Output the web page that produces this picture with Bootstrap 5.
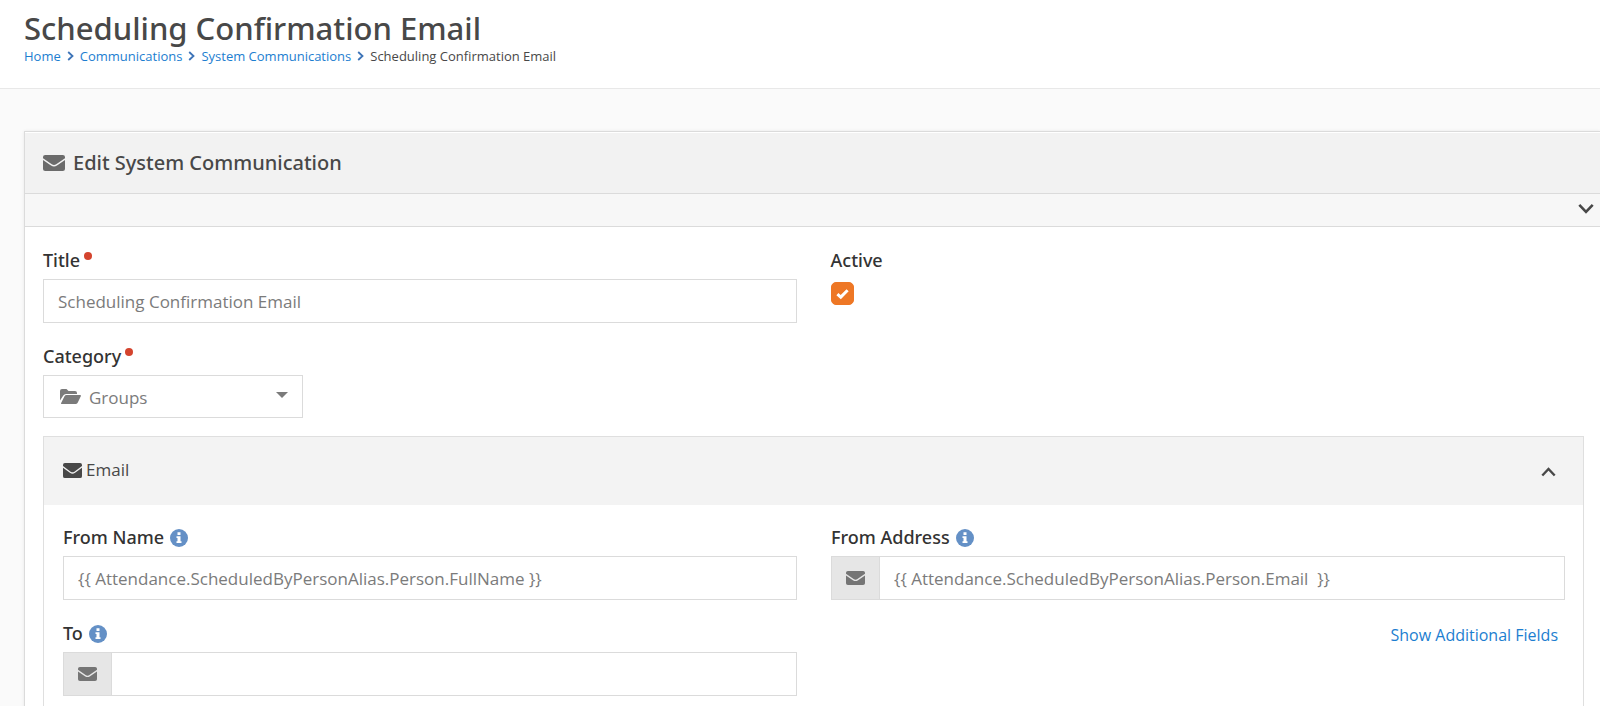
<!DOCTYPE html>
<html lang="en">
<head>
<meta charset="utf-8">
<meta name="viewport" content="width=device-width, initial-scale=1">
<title>Scheduling Confirmation Email</title>
<link href="https://cdn.jsdelivr.net/npm/bootstrap@5.3.0/dist/css/bootstrap.min.css" rel="stylesheet">
<style>
  body { font-family: "Open Sans", "Noto Sans", sans-serif; font-size: 17px; line-height: 24px; color: #484848; background: #fafafa; overflow-x: hidden; }
  a { color: #1c7ed0; text-decoration: none; }
  svg { fill: currentColor; flex: none; }
  .page-head { background: #fff; border-bottom: 1px solid #e8e8e8; padding: 10px 24px 22px; }
  .page-head h1, .edit-head h2, .field-label { font-family: "Noto Sans", sans-serif; font-weight: 500; }
  .page-head h1 { font-size: 31px; line-height: 36px; margin: 0; color: #484848; }
  .breadcrumb { font-size: 13px; line-height: 20px; margin: 0; }
  .breadcrumb svg { color: #3d74b8; margin: 0 6px; }
  .edit-panel { margin: 42px 0 0 24px; background: #fff; border: 1px solid #dbdbdb; border-right: 0; box-shadow: 0 0 3px rgba(0,0,0,.08); }
  .edit-head { background: #f2f2f2; height: 62px; padding: 0 18px; border-bottom: 1px solid #dbdbdb; box-shadow: inset 0 1px #fff; }
  .edit-head h2 { font-size: 20px; line-height: 28px; margin: 0; }
  .edit-head svg { color: #6b6b6b; }
  .drawer-bar { background: #f7f7f7; height: 33px; padding: 0 6px 4px; border-bottom: 1px solid #dbdbdb; }
  .plain-btn { border: 0; background: none; padding: 0; color: #484848; display: flex; }
  .edit-body { padding: 21px 16px 0 18px; }
  .row { --bs-gutter-x: 34px; }
  .next-field { margin-top: 21px; }
  .field-label { display: flex; align-items: center; height: 24px; margin-bottom: 7px; font-size: 18px; color: #333; }
  .req::after { content: ""; width: 8px; height: 8px; border-radius: 50%; background: #d4442e; margin: 0 0 8px 4px; }
  .help-btn { color: #6490c6; margin-left: 6px; }
  .form-control, .form-select { font-size: 17px; line-height: 24px; height: 44px; border: 1px solid #dbdbdb; border-radius: 0; color: #7b7b7b; background-color: #fff; }
  .form-control { padding: 8px 14px; }
  .pick { width: 260px; height: 43px; padding: 0 14px 0 16px; border: 1px solid #dbdbdb; color: #7b7b7b; }
  .pick .form-select { border: 0; background-image: none; padding: 2px 8px 0; height: 41px; }
  .input-group-text { width: 49px; justify-content: center; padding: 0; background: #e6e6e6; border-color: #dbdbdb; border-radius: 0; color: #757575; }
  .form-check-input { width: 23px; height: 23px; display: block; }
  .form-check-input[type=checkbox] { margin: 10px 0 0; border-radius: 5px; }
  .form-check-input:checked { background-color: #ee7725; border-color: #ee7725; background-size: 13px 13px; background-image: url("data:image/svg+xml,%3Csvg xmlns='http://www.w3.org/2000/svg' viewBox='0 0 12 12'%3E%3Cpath d='M1.3 6.5 4.4 9.3 10.7 3' fill='none' stroke='%23fff' stroke-width='2.8'/%3E%3C/svg%3E"); }
  .mail-panel { border: 1px solid #dfdfdf; border-bottom: 0; margin-top: 18px; }
  .mail-head { background: #f3f3f3; height: 68px; padding: 2px 27px 0 19px; }
  .mail-body { padding: 20px 18px 24px 19px; }
  .more-fields { padding: 2px 7px 0 0; font-size: 16px; }
</style>
</head>
<body>
<svg width="0" height="0" class="position-absolute" aria-hidden="true">
  <symbol id="mail" viewBox="0 0 20 16" preserveAspectRatio="none"><path d="M2 0h16a2 2 0 0 1 2 2v1.200L12 9.200q-2 1.500-4 0L0 3.200V2a2 2 0 0 1 2-2ZM0 5l7.300 5.500q2.700 2 5.400 0L20 5v9a2 2 0 0 1-2 2H2a2 2 0 0 1-2-2Z"/></symbol>
  <symbol id="help" viewBox="0 0 18 18"><circle cx="9" cy="9" r="9"/><path fill="#fff" d="M7.500 3.300h3v2.700h-3zM6.500 7.300h4v5h1v1.700h-5v-1.700h1V9h-1z"/></symbol>
  <symbol id="crumb" viewBox="0 0 7 10"><path d="M1.200 1 5.500 5 1.200 9" fill="none" stroke="currentColor" stroke-width="1.800"/></symbol>
</svg>
<header class="page-head">
  <h1>Scheduling Confirmation Email</h1>
  <nav class="breadcrumb align-items-center" aria-label="breadcrumb">
    <a href="#">Home</a><svg width="7" height="10"><use href="#crumb"/></svg><a href="#">Communications</a><svg width="7" height="10"><use href="#crumb"/></svg><a href="#">System Communications</a><svg width="7" height="10"><use href="#crumb"/></svg><span>Scheduling Confirmation Email</span>
  </nav>
</header>
<main class="edit-panel">
  <div class="edit-head d-flex align-items-center gap-2">
    <svg width="22" height="16"><use href="#mail"/></svg>
    <h2>Edit System Communication</h2>
  </div>
  <div class="drawer-bar d-flex justify-content-end align-items-center">
    <button type="button" class="plain-btn" aria-label="Show details"><svg width="16" height="11" viewBox="0 0 16 11"><path d="m1.300 1.800 6.700 7 6.700-7" fill="none" stroke="currentColor" stroke-width="2.600"/></svg></button>
  </div>
  <form class="edit-body">
    <div class="row">
      <div class="col-6">
        <label class="field-label req" for="title">Title</label>
        <input class="form-control" id="title" type="text" value="Scheduling Confirmation Email">
      </div>
      <div class="col-6">
        <label class="field-label mb-0" for="active">Active</label>
        <input class="form-check-input" id="active" type="checkbox" checked>
      </div>
    </div>
    <label class="field-label req next-field" for="category">Category</label>
    <div class="pick d-flex align-items-center">
      <svg width="21" height="15" viewBox="0 0 21 15"><path d="M0 11.500V2Q0 0 2 0h4.500l2 2H15q2 0 2 2v1H6Q4.200 5 3.300 6.500ZM1 14.200 4.500 7.300Q5.200 6 6.500 6H20q1.400 0 .8 1.300l-3 6.300Q17.200 15 16 15H1.500Q.7 15 1 14.200Z"/></svg>
      <select class="form-select flex-fill" id="category"><option>Groups</option></select>
      <svg class="mb-1" width="12" height="6" viewBox="0 0 12 6"><path d="M0 0h12L6 6Z"/></svg>
    </div>
    <section class="mail-panel">
      <div class="mail-head d-flex align-items-center justify-content-between">
        <div class="d-flex align-items-center gap-1 pb-1"><svg width="19" height="15"><use href="#mail"/></svg><span>Email</span></div>
        <button type="button" class="plain-btn" aria-label="Collapse email"><svg width="15" height="10" viewBox="0 0 15 10"><path d="m1.300 8.500 6.200-6.500 6.200 6.500" fill="none" stroke="currentColor" stroke-width="2.400"/></svg></button>
      </div>
      <div class="mail-body">
        <div class="row">
          <div class="col-6">
            <div class="d-flex"><label class="field-label" for="from-name">From Name</label><button type="button" class="plain-btn help-btn pt-1" aria-label="Help for From Name"><svg width="18" height="18"><use href="#help"/></svg></button></div>
            <input class="form-control" id="from-name" type="text" value="{{ Attendance.ScheduledByPersonAlias.Person.FullName }}">
          </div>
          <div class="col-6">
            <div class="d-flex"><label class="field-label" for="from-address">From Address</label><button type="button" class="plain-btn help-btn pt-1" aria-label="Help for From Address"><svg width="18" height="18"><use href="#help"/></svg></button></div>
            <div class="input-group"><span class="input-group-text"><svg width="19" height="14"><use href="#mail"/></svg></span><input class="form-control" id="from-address" type="text" value="{{ Attendance.ScheduledByPersonAlias.Person.Email  }}"></div>
          </div>
        </div>
        <div class="row next-field">
          <div class="col-6">
            <div class="d-flex"><label class="field-label" for="to">To</label><button type="button" class="plain-btn help-btn pt-1" aria-label="Help for To"><svg width="18" height="18"><use href="#help"/></svg></button></div>
            <div class="input-group"><span class="input-group-text"><svg width="19" height="14"><use href="#mail"/></svg></span><input class="form-control" id="to" type="text"></div>
          </div>
          <div class="col-6 text-end"><div class="more-fields"><a href="#">Show Additional Fields</a></div></div>
        </div>
      </div>
    </section>
  </form>
</main>
<script src="https://cdn.jsdelivr.net/npm/bootstrap@5.3.0/dist/js/bootstrap.bundle.min.js"></script>
</body>
</html>
